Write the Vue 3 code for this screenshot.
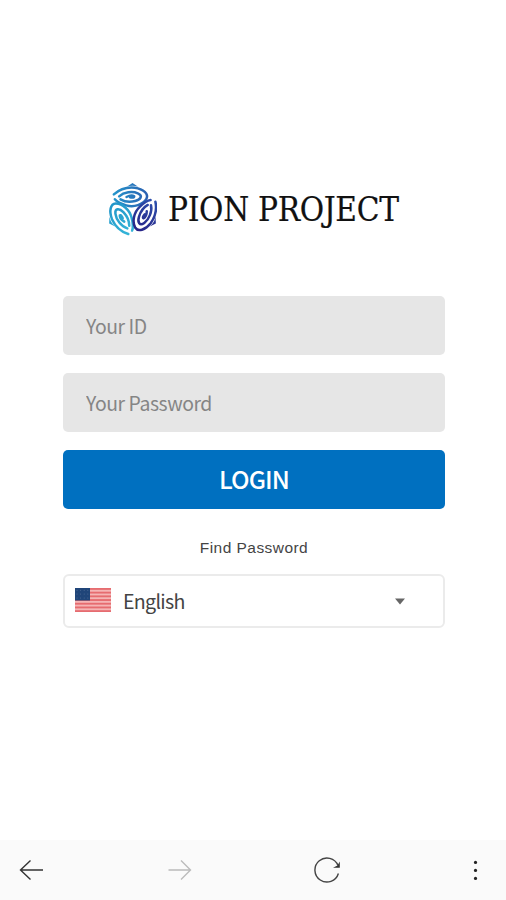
<template>
  <div class="login-page">
    <main class="content">
      <div class="brand">
        <svg class="brand-mark" viewBox="24 24 146 162">
          <defs>
            <linearGradient id="topFace" x1="40" y1="0" x2="150" y2="0" gradientUnits="userSpaceOnUse">
              <stop offset="0" stop-color="#2595cb" />
              <stop offset="1" stop-color="#2b5caf" />
            </linearGradient>
            <linearGradient id="leftFace" x1="40" y1="0" x2="150" y2="0" gradientUnits="userSpaceOnUse">
              <stop offset="0" stop-color="#35b5d8" />
              <stop offset="1" stop-color="#2093c8" />
            </linearGradient>
            <linearGradient id="rightFace" x1="40" y1="0" x2="150" y2="0" gradientUnits="userSpaceOnUse">
              <stop offset="0" stop-color="#2d4fac" />
              <stop offset="1" stop-color="#282184" />
            </linearGradient>
          </defs>
          <g v-for="face in faces" :key="face.fill" :transform="face.transform">
            <path :fill="face.fill" d="M80 35L97 24L114 35Q97 29 80 35Z" />
            <g fill="none" :stroke="face.fill" stroke-width="7.5" stroke-linecap="round">
              <path d="M41 58C60 41 86 36 104 38C130 42 146 57 139 71C129 89 101 98 78 91C64 87 50 81 44 73" />
              <path d="M57 64C71 51 97 48 113 55C129 62 122 74 105 78C88 82 73 80 61 73" />
              <path d="M79 66C88 61 98 61 102 64C103 67 96 69 90 67" />
            </g>
          </g>
        </svg>
        <svg class="brand-name" viewBox="0 0 234 42">
          <text x="1" y="32" textLength="231" lengthAdjust="spacing">PION PROJECT</text>
        </svg>
      </div>

      <form class="login-form" @submit.prevent>
        <input v-model="userId" class="field" type="text" placeholder="Your ID" />
        <input v-model="password" class="field" type="password" placeholder="Your Password" />
        <button class="login-btn" type="submit">LOGIN</button>
      </form>

      <a class="find-password">Find Password</a>

      <div class="language">
        <svg class="flag" viewBox="0 0 36 24">
          <rect width="36" height="24" fill="#f5b5b5" />
          <rect v-for="n in 7" :key="n" :y="(n - 1) * 3.7" width="36" height="1.85" fill="#e66c70" />
          <rect width="15" height="12.5" fill="#204579" />
          <g fill="#547199">
            <circle v-for="n in 12" :key="n" :cx="2 + ((n - 1) % 4) * 3.6" :cy="2.3 + Math.floor((n - 1) / 4) * 3.8" r="0.5" />
          </g>
        </svg>
        <span class="language-name">English</span>
        <svg class="caret" viewBox="0 0 12 7"><path d="M1 .5H11L6 6.5Z" fill="#666" /></svg>
      </div>
    </main>

    <nav class="toolbar">
      <svg class="icon" viewBox="0 0 28 28"><path d="M25 14H2.5M12.5 4.5L2.5 14L12.5 23.5" stroke="#333" /></svg>
      <svg class="icon" viewBox="0 0 28 28"><path d="M2.5 14H24.5M15 4.5L24.5 14L15 23.5" stroke="#bbb" /></svg>
      <svg class="icon" viewBox="0 0 28 28">
        <path d="M25.4 17.5A12 12 0 1 1 25 9.4" stroke="#444" />
        <path d="M26.8 5.5V11.8H20L24.5 9.5Z" fill="#333" />
      </svg>
      <svg class="icon" viewBox="0 0 28 28">
        <circle v-for="y in [6, 14, 22]" :key="y" cx="14.5" :cy="y + 0.4" r="1.6" fill="#222" />
      </svg>
    </nav>
  </div>
</template>

<script setup>
import { ref } from 'vue';

const userId = ref('');
const password = ref('');

// the three cube faces share one swirl
const faces = [
  { fill: 'url(#topFace)', transform: 'rotate(0 97 105)' },
  { fill: 'url(#leftFace)', transform: 'rotate(-120 97 105)' },
  { fill: 'url(#rightFace)', transform: 'rotate(120 97 105)' }
];
</script>

<style>
body {
  margin: 0;
  background: #fff;
}
</style>

<style scoped>
.login-page {
  height: 900px;
  display: flex;
  flex-direction: column;
  background: #fff;
  font-family: "Noto Sans CJK KR", "Noto Sans", sans-serif;
}

.content {
  flex: 1;
  display: flex;
  flex-direction: column;
  padding: 183px 61px 0 63px;
}

.brand {
  display: flex;
  align-items: center;
  height: 54px;
  margin-left: 45px;
}

.brand-mark {
  width: 49px;
  height: 54px;
  margin-right: 10px;
}

.brand-name {
  width: 234px;
  height: 42px;
  overflow: visible;
}

.brand-name text {
  font-family: "DejaVu Serif Condensed", "DejaVu Serif", serif;
  font-size: 33px;
  fill: #111;
  stroke: #111;
  stroke-width: 0.2;
}

.login-form {
  display: flex;
  flex-direction: column;
  gap: 18px;
  margin-top: 59px;
}

.field {
  box-sizing: border-box;
  width: 100%;
  height: 59px;
  padding: 0 23px 1px;
  border: 0;
  border-radius: 5px;
  background: #e6e6e6;
  color: #333;
  font-family: inherit;
  font-size: 19.4px;
  letter-spacing: -0.45px;
  outline: none;
}

.field::placeholder {
  color: #858585;
}

.login-btn {
  height: 59px;
  padding: 0 0 4px;
  border: 0;
  border-radius: 5px;
  background: #0070c0;
  color: #fff;
  font-family: inherit;
  font-size: 24.6px;
  font-weight: 500;
  letter-spacing: -0.9px;
}

.find-password {
  margin-top: 30px;
  text-align: center;
  color: #444;
  font: 15.5px/18px "Liberation Sans", Arial, sans-serif;
  letter-spacing: 0.45px;
}

.language {
  box-sizing: border-box;
  display: flex;
  align-items: center;
  height: 54px;
  margin-top: 17px;
  padding: 0 37px 0 10px;
  border: 2px solid #ebebeb;
  border-radius: 6px;
}

.flag {
  width: 36px;
  height: 24px;
  margin-top: -2px;
}

.language-name {
  flex: 1;
  margin: -2px 0 0 12px;
  color: #444;
  font-size: 19.6px;
  letter-spacing: -0.7px;
}

.caret {
  width: 12px;
  height: 7px;
  margin-top: 0;
}

.toolbar {
  box-sizing: border-box;
  display: flex;
  align-items: center;
  justify-content: space-between;
  height: 60px;
  padding: 0 17px 0 18px;
  background: #fafafa;
}

.icon {
  width: 28px;
  height: 28px;
  fill: none;
  stroke-width: 1.4;
}
</style>
